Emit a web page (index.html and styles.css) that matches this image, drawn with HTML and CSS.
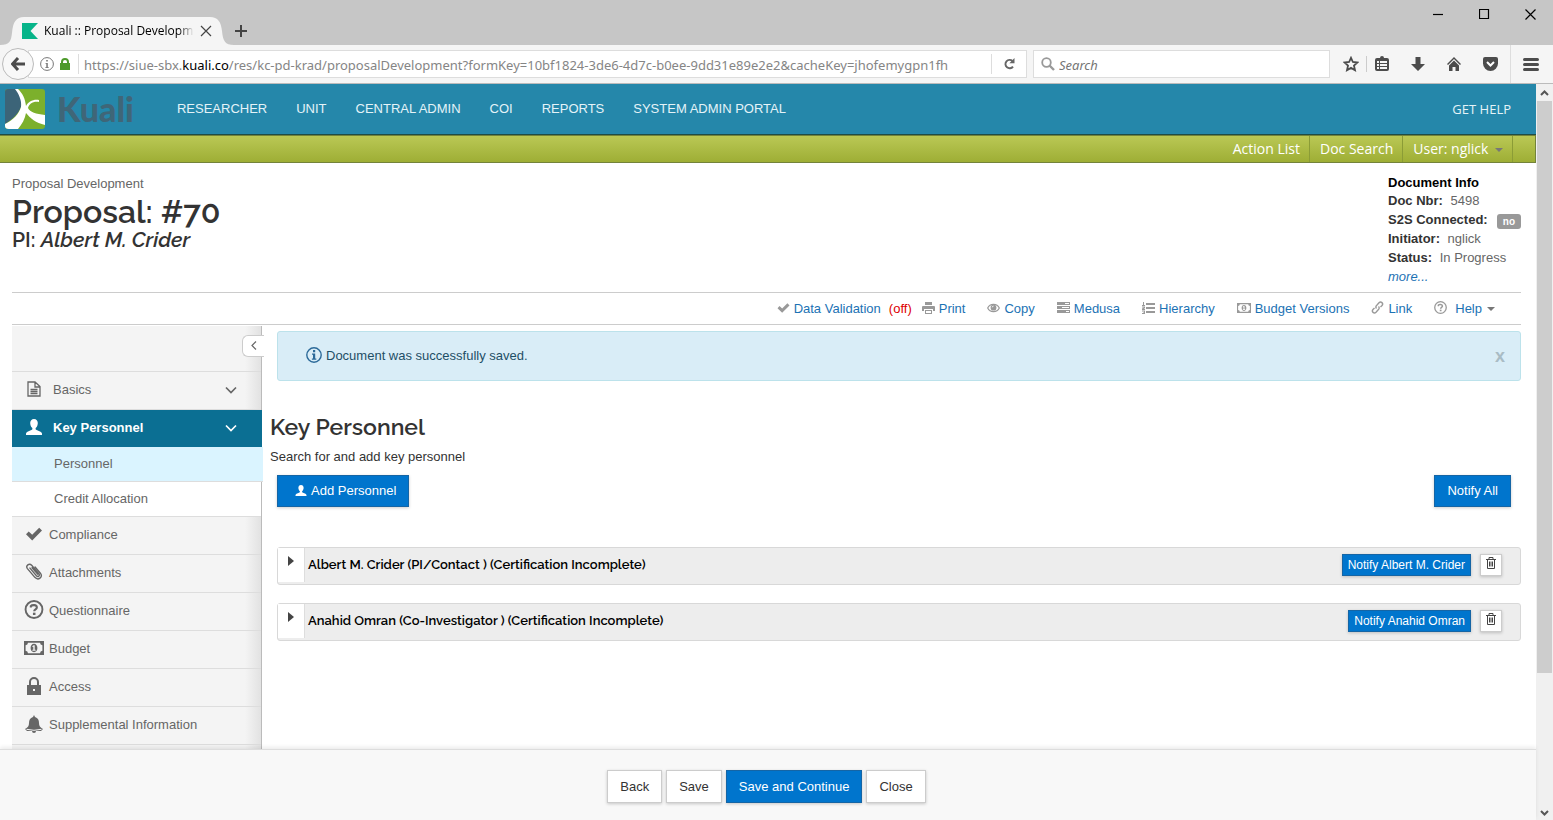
FILE: index.html
```html
<!DOCTYPE html>
<html lang="en">
<head>
<meta charset="utf-8">
<title>Kuali :: Proposal Development</title>
<link rel="stylesheet" href="styles.css">
</head>
<body>
<svg class="sprite" aria-hidden="true">
  <symbol id="i-user" viewBox="0 0 16 16"><path d="M8 0C5.600 0 4.200 1.700 4.200 4c0 1.800.7 3.800 1.900 4.800.5.500.4 1.700-.2 2L1.500 12.800C.5 13.300 0 14 0 15v1h16v-1c0-1-.5-1.700-1.500-2.200l-4.400-2c-.6-.3-.7-1.500-.2-2C11.100 7.800 11.800 5.800 11.800 4 11.800 1.700 10.400 0 8 0z"/></symbol>
  <symbol id="i-check" viewBox="0 0 16 16"><path d="M0 8.200 2.700 5.400 6.200 8.800 13.200 1.800 16 4.600 6.200 14.400z"/></symbol>
  <symbol id="i-help" viewBox="0 0 18 18"><circle cx="9" cy="9" r="8" fill="none" stroke="currentColor" stroke-width="1.800"/><path d="M6 7.200V5.800C6.800 4.700 11.700 4 11.700 7c0 1.900-2.500 1.800-2.500 3.700" fill="none" stroke="currentColor" stroke-width="2"/><path d="M8 12h2.400v2.200H8z"/></symbol>
  <symbol id="i-money" viewBox="0 0 20 14"><path fill-rule="evenodd" d="M0 0h20v14H0zM4 1.800A2.600 2.600 0 0 1 1.600 4.200v5.600A2.600 2.600 0 0 1 4 12.200h12a2.600 2.600 0 0 1 2.400-2.400V4.200A2.600 2.600 0 0 1 16 1.800zM10 2.800c2 0 3.400 1.900 3.400 4.200S12 11.200 10 11.200 6.600 9.300 6.600 7 8 2.800 10 2.800zM9.600 4.200 8.200 5.300l.5.8.6-.3v2.900h-.9v1h3.200v-1h-.9V4.200z"/></symbol>
  <symbol id="i-clip" viewBox="0 0 16 16"><path d="M4.200 4.800 10.300 12c1.500 1.600 3.600-.1 2.300-1.800L5.800 2.200C3.500-.2-.2 2.500 1.800 5.300l7 8.200c3.200 3.400 7.900-.2 5.200-3.900L9 3.800M6.200 4.500l5.200 6" fill="none" stroke="currentColor" stroke-width="1.300" stroke-linecap="round"/></symbol>
  <symbol id="i-trash" viewBox="0 0 10 12"><path fill="none" stroke="currentColor" d="M0 2.500h10M3 2.500v-2h4v2M1.500 2.500v9h7v-9M3.500 4.500v5M5 4.500v5M6.500 4.500v5"/></symbol>
  <symbol id="i-chevron" viewBox="0 0 12 8"><path d="M1 1.500 6 6.500 11 1.500" fill="none" stroke="currentColor" stroke-width="1.700"/></symbol>
</svg>

<div class="tabbar">
  <div class="tab">
    <svg class="tab-shape" viewBox="0 0 234 28" aria-hidden="true"><path d="M0 28C10 28 11 24 12 16 13 5 16 0 24 0H210c8 0 11 5 12 14 1 10 3 14 12 14z"/></svg>
    <svg class="tab-logo" viewBox="0 0 16 16" aria-hidden="true"><path d="M0 0h16L8.500 8 16 16H0z"/></svg>
    <span class="tab-title">Kuali :: Proposal Development</span>
    <button class="bare" aria-label="Close tab"><svg width="12" height="12" viewBox="0 0 12 12"><path class="line" d="M1 1l10 10M11 1 1 11"/></svg></button>
  </div>
  <button class="bare new-tab" aria-label="New tab"><svg width="12" height="12" viewBox="0 0 12 12"><path class="line bold" d="M6 0v12M0 6h12"/></svg></button>
  <div class="window-buttons">
    <button class="bare" aria-label="Minimize"><svg width="11" height="11" viewBox="0 0 11 11"><path class="line" d="M0 5.500h10"/></svg></button>
    <button class="bare" aria-label="Maximize"><svg width="11" height="11" viewBox="0 0 11 11"><path class="line" d="M.5.5h9v9h-9z"/></svg></button>
    <button class="bare" aria-label="Close window"><svg width="11" height="11" viewBox="0 0 11 11"><path class="line" d="M.5.5l10 10M10.500.5l-10 10"/></svg></button>
  </div>
</div>

<div class="navbar">
  <button class="back" aria-label="Back"><svg width="14" height="14" viewBox="0 0 14 14"><path d="M7 1 1.500 7 7 13M2 7h12" fill="none" stroke="currentColor" stroke-width="3"/></svg></button>
  <div class="urlbar">
    <svg width="14" height="14" viewBox="0 0 14 14" aria-hidden="true"><circle cx="7" cy="7" r="6.400" fill="none" stroke="#777"/><path d="M6.200 3h1.600v1.600H6.200zM5.500 6h2.300v4.200h1v.8H5.300v-.8h1V6.800h-.8z" fill="#777"/></svg>
    <svg class="lock" width="10" height="12" viewBox="0 0 10 12" aria-hidden="true"><path fill-rule="evenodd" d="M0 5h1V4a4 4 0 0 1 8 0v1h1v7H0zM3 5h4V4a2 2 0 0 0-4 0z"/></svg>
    <div class="url" role="textbox" aria-label="Address" contenteditable="true" spellcheck="false">https://siue-sbx.<b>kuali.co</b>/res/kc-pd-krad/proposalDevelopment?formKey=10bf1824-3de6-4d7c-b0ee-9dd31e89e2e2&amp;cacheKey=jhofemygpn1fh</div>
    <button class="bare reload" aria-label="Reload"><svg width="11" height="12" viewBox="0 0 11 12"><path d="M8.500 3A4.200 4.200 0 1 0 9 8.600" fill="none" stroke="#666" stroke-width="1.900"/><path d="M10.500 0v5.200H5.400z" fill="#666"/></svg></button>
  </div>
  <label class="searchbar">
    <svg width="14" height="14" viewBox="0 0 14 14" aria-hidden="true"><circle cx="5.500" cy="5.500" r="4.300" fill="none" stroke="#999" stroke-width="1.800"/><path d="M8.500 8.500 13 13" stroke="#999" stroke-width="2.400"/></svg>
    <input type="text" placeholder="Search" aria-label="Search">
  </label>
  <div class="browser-tools">
    <button class="bare" aria-label="Bookmark"><svg width="16" height="16" viewBox="0 0 16 16"><path d="M8 1.800 9.900 6l4.600.5-3.500 3.100 1 4.600L8 11.900l-4 2.300 1-4.600L1.500 6.500 6.100 6z" fill="none" stroke="#4c4c4c" stroke-width="1.800"/></svg></button>
    <button class="bare split" aria-label="Library"><svg width="14" height="16" viewBox="0 0 14 16"><path fill-rule="evenodd" d="M2 2h3a2 2 0 0 1 4 0h3q2 0 2 2v9q0 2-2 2H2q-2 0-2-2V4q0-2 2-2zM2 5v2h2V5zM5 5v2h7V5zM2 8v2h2V8zM5 8v2h7V8zM2 11v2h2v-2zM5 11v2h7v-2z"/></svg></button>
    <button class="bare" aria-label="Downloads"><svg width="14" height="14" viewBox="0 0 14 14"><path d="M4.500 0h5v7H14l-7 7-7-7h4.500z"/></svg></button>
    <button class="bare" aria-label="Home"><svg width="14" height="14" viewBox="0 0 14 14"><path d="M7 0 14 7l-1 1L7 2 1 8 0 7zM7 3.500 12 8.500V14H8.500v-4h-3v4H2V8.500z"/></svg></button>
    <button class="bare" aria-label="Pocket"><svg width="15" height="14" viewBox="0 0 15 14"><path d="M2 0h11q2 0 2 2v4.500a7.500 7.500 0 0 1-15 0V2q0-2 2-2z"/><path d="M4 5l3.500 3.500L11 5" fill="none" stroke="#fff" stroke-width="2"/></svg></button>
    <button class="bare menu" aria-label="Open menu"><svg width="16" height="13" viewBox="0 0 16 13"><path d="M1.500 1.500h13M1.500 6.500h13M1.500 11.500h13" stroke="#4c4c4c" stroke-width="3" stroke-linecap="round"/></svg></button>
  </div>
</div>

<div class="viewport">
  <div class="page">
    <header class="topnav">
      <a class="brand" href="#" aria-label="Kuali">
        <svg width="40" height="40" viewBox="0 0 40 40" aria-hidden="true"><rect width="40" height="40" rx="3" fill="#7cb02c"/><path d="M3 0h8c5 6 6 12 5 18C13 26 6 31 0 35V3q0-3 3-3z" fill="#3c6478"/><path d="M10 0h3c5 5 7 9 8 17 2-4 7-7 13-6v2c-6-1-10 2-11 6 2 4 8 6 17 7v10c-9-2-15-7-19-12-1 6-4 11-8 16H4q-4 0-4-3v-2c8-4 14-10 16-17 1-6-2-13-6-18z" fill="#fff"/></svg>
        <span>Kuali</span>
      </a>
      <nav class="main-links">
        <a href="#">RESEARCHER</a><a href="#">UNIT</a><a href="#">CENTRAL ADMIN</a><a href="#">COI</a><a href="#">REPORTS</a><a href="#">SYSTEM ADMIN PORTAL</a>
      </nav>
      <a class="get-help" href="#">GET HELP</a>
    </header>
    <nav class="subnav">
      <a href="#">Action List</a><a href="#">Doc Search</a><a href="#">User: nglick <span class="caret"></span></a>
    </nav>

    <div class="content">
      <header class="doc-header">
        <div>
          <p class="crumb">Proposal Development</p>
          <h1>Proposal: #70</h1>
          <p class="pi">PI: <em>Albert M. Crider</em></p>
        </div>
        <div class="doc-info">
          <strong class="black">Document Info</strong>
          <div><strong>Doc Nbr:</strong> 5498</div>
          <div><strong>S2S Connected:</strong> <span class="badge">no</span></div>
          <div><strong>Initiator:</strong> nglick</div>
          <div><strong>Status:</strong> In Progress</div>
          <a href="#">more...</a>
        </div>
      </header>

      <nav class="actions">
        <a href="#" class="validation"><svg width="13" height="12"><use href="#i-check"/></svg>Data Validation <span class="off">(off)</span></a>
        <a href="#"><svg width="13" height="12" viewBox="0 0 13 12"><path fill-rule="evenodd" d="M3 0h7v3H3zM1 4h11q1 0 1 1v4h-2V7H2v2H0V5q0-1 1-1zM3 8h7v4H3zM4 9v2h5V9z"/></svg>Print</a>
        <a href="#"><svg width="13" height="10" viewBox="0 0 13 10"><path d="M.7 5C3 .2 10 .2 12.300 5 10 9.800 3 9.800.7 5z" fill="none" stroke="currentColor" stroke-width="1.200"/><circle cx="6.500" cy="4.700" r="2.900"/><path d="M5.300 4.300q0-1.200 1.200-1.200" stroke="#fff" fill="none"/></svg>Copy</a>
        <a href="#"><svg width="13" height="12" viewBox="0 0 13 12"><path fill-rule="evenodd" d="M0 0h13v3H0zM0 4h13v3H0zM0 8h13v3H0zM8 1v1h4V1zM5 5v1h7V5zM9 9v1h3V9z"/></svg>Medusa</a>
        <a href="#"><svg width="13" height="12" viewBox="0 0 13 12"><path d="M4 1h9v2H4zM4 5h9v2H4zM4 9h9v2H4zM1 0h1v3h1v1H0V3h1zM0 4.500h3v1.800L1.500 7H3v1H0V6.500l2-1H0zM0 8.500h3V12H0v-1h2v-.4H1v-.7h1v-.4H0z"/></svg>Hierarchy</a>
        <a href="#"><svg width="14" height="10"><use href="#i-money"/></svg>Budget Versions</a>
        <a href="#"><svg width="13" height="13" viewBox="0 0 13 13"><path d="M5.500 7.500C4 6 5 5 6 4l2-2.200c2-2 4.800.6 3 2.700L9.500 6M7.500 5.500C9 7 8 8 7 9l-2 2.200c-2 2-4.800-.6-3-2.700L3.500 7" fill="none" stroke="currentColor" stroke-width="1.400"/></svg>Link</a>
        <a href="#" class="help"><svg width="13" height="13"><use href="#i-help"/></svg>Help<span class="caret"></span></a>
      </nav>

      <div class="columns">
        <aside class="sidebar">
          <div class="side-head"><button class="collapse" aria-label="Collapse"><svg width="6" height="9" viewBox="0 0 6 9"><path class="line" d="M5 .5 1 4.500l4 4"/></svg></button></div>
          <nav>
            <a href="#" class="wide"><svg viewBox="0 0 14 16" height="16"><path d="M1 1h7l5 4.500V15H1zM8 1v5h5M3.500 8.500h7M3.500 10.500h7M3.500 12.500h7" fill="none" stroke="currentColor" stroke-width="1.300"/></svg>Basics<svg class="chev" height="8"><use href="#i-chevron"/></svg></a>
            <a href="#" class="wide active"><svg height="16"><use href="#i-user"/></svg>Key Personnel<svg class="chev" height="8"><use href="#i-chevron"/></svg></a>
            <a href="#" class="sub current">Personnel</a>
            <a href="#" class="sub">Credit Allocation</a>
            <a href="#"><svg height="16"><use href="#i-check"/></svg>Compliance</a>
            <a href="#"><svg height="17"><use href="#i-clip"/></svg>Attachments</a>
            <a href="#"><svg height="19"><use href="#i-help"/></svg>Questionnaire</a>
            <a href="#"><svg height="14"><use href="#i-money"/></svg>Budget</a>
            <a href="#"><svg viewBox="0 0 14 18" height="18"><path fill-rule="evenodd" d="M0 8h2V5a5 5 0 0 1 10 0v3h2v10H0zM4 8h6V5a3 3 0 0 0-6 0zM6 12v2h2v-2z"/></svg>Access</a>
            <a href="#"><svg viewBox="0 0 18 18" height="18"><path d="M9 0l1 2c3 1 4 3 4 6 0 3 1 4 4 6l-2 2H2l-2-2c3-2 4-3 4-6 0-3 1-5 4-6z"/><path d="M1.500 14.300q7.500 2 15 0" stroke="#f4f4f4" fill="none"/><path d="M7 16h4a2 2 0 0 1-4 0z"/></svg>Supplemental Information</a>
            <a href="#">&nbsp;</a>
          </nav>
        </aside>

        <main>
          <div class="alert" role="status">
            <svg width="16" height="16" viewBox="0 0 16 16" aria-hidden="true"><circle cx="8" cy="8" r="7.200" fill="none" stroke="currentColor" stroke-width="1.400"/><path d="M7 3h2.200v2.200H7zM6 6.500h3.200v5h1.100v1.300H5.900v-1.300H7V7.700H6z"/></svg>
            Document was successfully saved.
            <button class="bare dismiss" aria-label="Dismiss">x</button>
          </div>
          <h2>Key Personnel</h2>
          <p class="lead">Search for and add key personnel</p>
          <div class="button-row">
            <button class="btn primary add"><svg width="12" height="11"><use href="#i-user"/></svg>Add Personnel</button>
            <button class="btn primary">Notify All</button>
          </div>
          <section class="person">
            <button class="toggle" aria-label="Expand"></button>
            <h3>Albert M. Crider (PI/Contact ) (Certification Incomplete)</h3>
            <button class="btn primary small">Notify Albert M. Crider</button>
            <button class="btn small trash" aria-label="Delete"><svg width="10" height="12"><use href="#i-trash"/></svg></button>
          </section>
          <section class="person">
            <button class="toggle" aria-label="Expand"></button>
            <h3>Anahid Omran (Co-Investigator ) (Certification Incomplete)</h3>
            <button class="btn primary small">Notify Anahid Omran</button>
            <button class="btn small trash" aria-label="Delete"><svg width="10" height="12"><use href="#i-trash"/></svg></button>
          </section>
        </main>
      </div>
    </div>

    <footer>
      <button class="btn">Back</button>
      <button class="btn">Save</button>
      <button class="btn primary">Save and Continue</button>
      <button class="btn">Close</button>
    </footer>
  </div>
  <div class="scrollbar" aria-hidden="true">
    <svg width="9" height="6" viewBox="0 0 9 6"><path d="M1 5l3.500-3.500L8 5"/></svg>
    <div class="thumb"></div>
    <svg width="9" height="6" viewBox="0 0 9 6"><path d="M1 1l3.500 3.500L8 1"/></svg>
  </div>
</div>
</body>
</html>
```

FILE: styles.css
```css
* { box-sizing: border-box; }
body {
  margin: 0;
  height: 100vh;
  display: flex;
  flex-direction: column;
  overflow: hidden;
  background: #fff;
  color: #333;
  font: 13px/18px "Liberation Sans", Arial, sans-serif;
}
h1, h2, h3, p { margin: 0; }
a { color: #1c72b4; text-decoration: none; }
button, input { font: inherit; color: inherit; }
svg { fill: currentColor; flex: none; display: block; }
.sprite { position: absolute; width: 0; height: 0; }
.bare { border: 0; padding: 0; background: none; display: flex; align-items: center; justify-content: center; }
.line { fill: none; stroke: currentColor; stroke-width: 1.2; }
.line.bold { stroke-width: 2; }
.caret { display: inline-block; border: 4px solid transparent; border-top-color: #777; border-bottom: 0; vertical-align: middle; }

/* Browser chrome */
.tabbar { flex: none; height: 45px; display: flex; align-items: flex-end; background: #c6c6c6; color: #444; font: 12px/16px "Open Sans", sans-serif; }
.tab { position: relative; isolation: isolate; width: 234px; height: 28px; display: flex; align-items: center; gap: 6px; padding-left: 22px; }
.tab-shape { position: absolute; inset: 0; z-index: -1; width: 234px; height: 28px; fill: #f5f5f5; }
.tab-logo { width: 16px; height: 16px; fill: #07b489; }
.tab-title { width: 150px; overflow: hidden; white-space: nowrap; color: #000; mask-image: linear-gradient(to right, #000 90%, transparent); }
.new-tab { height: 28px; margin-left: 1px; }
.window-buttons { display: flex; gap: 35px; align-self: flex-start; margin-left: auto; padding: 9px 17px; color: #000; }
.navbar { flex: none; height: 39px; display: flex; align-items: center; background: #f5f5f5; border-bottom: 1px solid #bbb; color: #4c4c4c; font-family: "Noto Sans", sans-serif; }
.back { position: relative; z-index: 1; width: 32px; height: 32px; margin-left: 2px; display: grid; place-items: center; padding: 0; border: 1px solid #bbb; border-radius: 50%; background: #f8f8f8; }
.urlbar { flex: 1; min-width: 0; height: 28px; margin-left: -6px; padding-left: 11px; display: flex; align-items: center; gap: 6px; border: 1px solid #ddd; background: #fff; }
.lock { fill: #4d9a2a; }
.url { flex: 1; min-width: 0; height: 20px; margin-left: 2px; padding-left: 5px; line-height: 22px; border-left: 1px solid #ddd; overflow: hidden; white-space: nowrap; color: #858585; outline: 0; }
.url b { font-weight: 400; color: #000; }
.reload { width: 35px; height: 20px; margin-left: 18px; border-left: 1px solid #ddd; }
.searchbar { width: 297px; height: 28px; margin-left: 6px; display: flex; align-items: center; gap: 4px; padding: 0 7px; border: 1px solid #ddd; background: #fff; }
.searchbar input { flex: 1; min-width: 0; border: 0; padding: 1px 0 0; background: none; outline: 0; }
.searchbar input::placeholder { color: #757575; opacity: 1; font-style: italic; }
.browser-tools { display: flex; align-items: center; gap: 22px; padding: 0 14px 0 13px; height: 38px; }
.split { margin-left: -15px; padding-left: 8px; border-left: 1px solid #ccc; }
.menu { height: 38px; margin-left: -10px; padding-left: 12px; border-left: 1px solid #ddd; }
.viewport { flex: 1; min-height: 0; display: flex; }
.scrollbar { width: 17px; flex: none; display: flex; flex-direction: column; align-items: center; padding: 6px 1px 4px; gap: 5px; background: #f0f0f0; }
.scrollbar svg { fill: none; stroke: #555; stroke-width: 2; }
.thumb { width: 100%; height: 572px; margin-bottom: auto; background: #cdcdcd; }

/* Portal header */
.page { position: relative; flex: 1; min-width: 0; display: flex; flex-direction: column; }
.topnav { flex: none; height: 51px; display: flex; align-items: center; padding: 0 25px 0 5px; background: #2587aa; border-bottom: 1px solid #1f4d45; }
.topnav a { color: #e4f3f8; }
.topnav .brand { display: flex; align-items: center; gap: 12px; color: #3f6678; font: 900 34px/40px Lato, sans-serif; }
.main-links { display: flex; gap: 29px; margin-left: 43px; line-height: 20px; }
.get-help { margin-left: auto; font-family: "Open Sans", sans-serif; }
.subnav { flex: none; height: 28px; display: flex; justify-content: flex-end; padding-right: 22px; background: linear-gradient(#bac855, #9eae35); border: 1px solid #73833a; border-left: 0; font: 14px/26px "Open Sans", sans-serif; }
.subnav a { padding: 0 9px 0 10px; border-right: 1px solid #8b9c36; color: #fff; }
.subnav .caret { margin-left: 3px; }

/* Document */
.content { flex: 1; min-height: 0; overflow: hidden; display: flex; flex-direction: column; padding: 0 15px 0 12px; }
.doc-header { flex: none; display: flex; justify-content: space-between; padding: 10px 0 6px; }
.crumb { padding-top: 2px; color: #666; }
h1 { padding-top: 1px; font: 600 32px/36px Raleway, Lato, sans-serif; font-variant-numeric: oldstyle-nums; }
.pi { font: 600 21px/20px Raleway, Lato, sans-serif; }
.doc-info { width: 133px; line-height: 19px; color: #666; }
.doc-info strong { color: #333; margin-right: 4px; }
.doc-info .black { display: block; height: 18px; line-height: 20px; color: #000; }
.doc-info a { font-style: italic; }
.badge { float: right; margin-top: 4px; padding: 0 6px; border-radius: 3px; background: #999; color: #fff; font: bold 10px/15px "Liberation Sans", Arial, sans-serif; }
.actions { flex: none; height: 33px; display: flex; justify-content: flex-end; align-items: center; gap: 22px; padding-right: 26px; border: 1px solid #ccc; border-width: 1px 0; }
.actions a { display: flex; align-items: center; gap: 4px; }
.actions svg { color: #999; margin-bottom: 2px; }
.actions .validation { margin-right: -12px; }
.actions .help { gap: 5px; }
.actions .help svg { margin-right: 3px; }
.off { margin-left: 4px; color: #d00; }
.columns { flex: 1; min-height: 0; display: flex; padding-top: 1px; }

.sidebar { flex: none; width: 250px; border-right: 1px solid #bbb; background: linear-gradient(to left, #e2e2e2, #f4f4f4 16px); color: #666; }
.side-head { height: 46px; display: flex; justify-content: flex-end; align-items: flex-start; padding-top: 9px; border-bottom: 1px solid #ddd; }
.collapse { width: 22px; height: 22px; flex: none; margin-right: -3px; display: grid; place-items: center; padding: 0 0 2px; background: #fff; border: 1px solid #ccc; border-right: 0; border-radius: 6px 0 0 6px; }
.sidebar nav a { height: 38px; display: flex; align-items: center; gap: 4px; padding: 0 20px 2px 11px; border-bottom: 1px solid #ddd; color: #666; }
.sidebar nav svg { width: 22px; }
.sidebar nav a > svg:first-child { margin-bottom: 2px; }
.sidebar nav .wide { gap: 8px; }
.sidebar nav .chev { width: 20px; margin-left: auto; }
.sidebar nav .active { height: 37px; margin-right: -1px; padding-right: 21px; padding-bottom: 0; background: #0b6f93; border-bottom-color: #0b6f93; color: #fff; font-weight: 700; }
.sidebar nav .sub { height: 35px; padding-left: 42px; padding-bottom: 0; background: #fff; }
.sidebar nav .current { margin-right: -2px; background: #daf4ff; }

main { flex: 1; min-width: 0; padding: 5px 0 0 15px; }
.alert { height: 50px; display: flex; align-items: center; gap: 4px; padding: 0 15px 0 28px; border: 1px solid #bce2eb; border-radius: 3px; background: #d9edf7; color: #1e4f66; }
.alert svg { color: #2c6a99; margin-bottom: 2px; }
.dismiss { margin-left: auto; color: #a9bcc5; font: bold 18px/20px "Liberation Sans", Arial, sans-serif; }
h2 { margin: 32px 0 0 -7px; font: 600 23px/28px Raleway, Lato, sans-serif; }
.lead { margin: 7px 0 9px -7px; }
.button-row { display: flex; justify-content: space-between; padding-right: 10px; margin-bottom: 40px; }
.btn { height: 33px; padding: 0 12px; background: #fff; border: 1px solid #ccc; box-shadow: 0 1px 3px rgba(0, 0, 0, .2); white-space: nowrap; }
.btn.primary { background: #0075cd; border-color: #1565a5; color: #fff; }
.button-row .btn { height: 32px; }
.add { display: flex; align-items: center; gap: 4px; }
.add svg { margin-bottom: 2px; }
.btn.add { padding-left: 17px; }
.person { height: 38px; display: flex; align-items: center; margin-bottom: 18px; padding: 0 18px 3px 0; border: 1px solid #d8d8d8; border-radius: 3px; background: #ededed; }
.toggle { align-self: flex-start; width: 27px; height: 34px; display: flex; align-items: flex-start; padding: 8px 0 0 10px; border: 0; border-right: 1px solid #ddd; background: #fff; }
.toggle::before { content: ""; border: 5px solid transparent; border-left: 6px solid #444; border-right: 0; }
h3 { flex: 1; margin-left: 3px; color: #000; font: 600 13px/18px Raleway, Lato, sans-serif; }
.btn.small { height: 22px; padding: 0 5px; font-size: 12px; line-height: 18px; }
.btn.trash { width: 22px; margin-left: 9px; display: grid; place-items: center; padding-bottom: 3px; color: #444; }
footer { position: relative; flex: none; height: 71px; display: flex; justify-content: center; gap: 4px; padding: 20px 3px 0 0; background: #f8f8f8; border-top: 1px solid #ddd; box-shadow: 0 -2px 4px rgba(0, 0, 0, .08); }
```
